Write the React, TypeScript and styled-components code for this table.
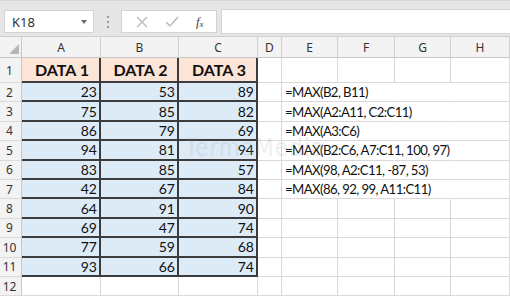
import React from 'react';
import styled, { createGlobalStyle } from 'styled-components';

const GlobalStyle = createGlobalStyle`
  html, body {
    margin: 0;
    padding: 0;
    background: #ffffff;
    overflow: hidden;
  }
`;

const COLUMNS = ['A', 'B', 'C', 'D', 'E', 'F', 'G', 'H'];

const DATA: number[][] = [
  [23, 53, 89],
  [75, 85, 82],
  [86, 79, 69],
  [94, 81, 94],
  [83, 85, 57],
  [42, 67, 84],
  [64, 91, 90],
  [69, 47, 74],
  [77, 59, 68],
  [93, 66, 74],
];

const FORMULAS = [
  '=MAX(B2, B11)',
  '=MAX(A2:A11, C2:C11)',
  '=MAX(A3:C6)',
  '=MAX(B2:C6, A7:C11, 100, 97)',
  '=MAX(98, A2:C11, -87, 53)',
  '=MAX(86, 92, 99, A11:C11)',
];

const App: React.FC = () => {
  const rows = [];
  for (let r = 1; r <= 12; r++) {
    const cells = [];
    cells.push(<RowHead key="h">{r}</RowHead>);
    for (let c = 0; c < COLUMNS.length; c++) {
      const formula = FORMULAS[r - 2];
      const overflow = !!formula && c >= 4;
      if (r === 1 && c < 3) {
        cells.push(
          <Cell key={c} $kind="head">
            DATA {c + 1}
          </Cell>
        );
      } else if (r >= 2 && r <= 11 && c < 3) {
        cells.push(
          <Cell key={c} $kind="data">
            {DATA[r - 2][c]}
          </Cell>
        );
      } else if (c === 4 && formula) {
        cells.push(
          <Cell key={c} $kind="text" $noRight>
            {formula}
          </Cell>
        );
      } else {
        cells.push(<Cell key={c} $kind="plain" $noRight={overflow && c < 7} />);
      }
    }
    rows.push(<React.Fragment key={r}>{cells}</React.Fragment>);
  }

  return (
    <>
      <GlobalStyle />
      <Page>
        <FormulaBar>
          <NameBox>
            <span>K18</span>
            <DropArrow />
          </NameBox>
          <Grip>
            <i />
            <i />
            <i />
          </Grip>
          <ButtonBox>
            <svg width="12" height="12" viewBox="0 0 12 12">
              <path d="M1 1 L11 11 M11 1 L1 11" stroke="#b9b9b9" strokeWidth="1.3" fill="none" />
            </svg>
            <svg width="14" height="12" viewBox="0 0 14 12">
              <path d="M1 6 L5 10 L13 1" stroke="#b9b9b9" strokeWidth="1.4" fill="none" />
            </svg>
            <Fx>
              f<sub>x</sub>
            </Fx>
          </ButtonBox>
          <FormulaInput />
        </FormulaBar>
        <Sheet>
          <Corner>
            <svg width="10" height="10" viewBox="0 0 10 10">
              <path d="M10 0 L10 10 L0 10 Z" fill="#b7b7b7" />
            </svg>
          </Corner>
          {COLUMNS.map((col) => (
            <ColHead key={col}>{col}</ColHead>
          ))}
          {rows}
          <Watermark>TermaMedia</Watermark>
        </Sheet>
      </Page>
    </>
  );
};

const Page = styled.div`
  width: 510px;
  height: 298px;
  overflow: hidden;
  font-family: 'Segoe UI', 'Noto Sans', sans-serif;
`;

const FormulaBar = styled.div`
  display: flex;
  align-items: center;
  height: 37px;
  padding: 10px 0 4px 4px;
  box-sizing: border-box;
  background: #e6e6e6;
  border-top: 1px solid #d8d8d8;
  border-bottom: 1px solid #cfcfcf;
`;

const NameBox = styled.div`
  display: flex;
  align-items: center;
  justify-content: space-between;
  width: 90px;
  height: 23px;
  box-sizing: border-box;
  padding: 0 6px 0 7px;
  background: #ffffff;
  border: 1px solid #d4d4d4;
  font-family: 'Open Sans', 'Noto Sans', sans-serif;
  font-size: 13px;
  color: #222;
`;

const DropArrow = styled.span`
  width: 0;
  height: 0;
  border-left: 3.5px solid transparent;
  border-right: 3.5px solid transparent;
  border-top: 4px solid #6b6b6b;
`;

const Grip = styled.div`
  display: flex;
  flex-direction: column;
  align-items: center;
  gap: 3px;
  width: 27px;

  i {
    width: 2px;
    height: 2px;
    background: #9a9a9a;
  }
`;

const ButtonBox = styled.div`
  display: flex;
  align-items: center;
  justify-content: space-around;
  width: 96px;
  height: 23px;
  box-sizing: border-box;
  padding: 0 4px 0 6px;
  background: #ffffff;
  border: 1px solid #d4d4d4;
`;

const Fx = styled.span`
  font-family: 'Liberation Serif', serif;
  font-style: italic;
  font-size: 13px;
  color: #444;

  sub {
    font-size: 9px;
    vertical-align: -1px;
  }
`;

const FormulaInput = styled.div`
  flex: 1;
  height: 23px;
  margin-left: 4px;
  background: #ffffff;
  border: 1px solid #d4d4d4;
  border-right: none;
`;

const Sheet = styled.div`
  position: relative;
  display: grid;
  grid-template-columns: 22px 79px 78px 79px 24px 56px 57px 56px 59px;
  grid-template-rows: 21px 25px repeat(11, 19.4px);
`;

const Corner = styled.div`
  display: flex;
  align-items: flex-end;
  justify-content: flex-end;
  padding: 0 2px 3px 0;
  background: #f3f3f3;
  border-right: 1px solid #c8c8c8;
  border-bottom: 1px solid #c8c8c8;
`;

const ColHead = styled.div`
  display: flex;
  align-items: center;
  justify-content: center;
  background: #f3f3f3;
  border-right: 1px solid #d0d0d0;
  border-bottom: 1px solid #c8c8c8;
  font-size: 12px;
  color: #333;
`;

const RowHead = styled.div`
  display: flex;
  align-items: center;
  justify-content: center;
  padding-right: 2px;
  background: #f3f3f3;
  border-right: 1px solid #c8c8c8;
  border-bottom: 1px solid #dadada;
  font-size: 12px;
  color: #333;
`;

type CellKind = 'plain' | 'head' | 'data' | 'text';

const Cell = styled.div<{ $kind: CellKind; $noRight?: boolean }>`
  position: relative;
  display: flex;
  align-items: center;
  min-width: 0;
  box-sizing: border-box;
  overflow: visible;
  white-space: nowrap;
  font-family: Lato, 'Open Sans', sans-serif;
  color: #111;
  border-right: ${({ $kind, $noRight }) =>
    $kind === 'head' || $kind === 'data'
      ? '2px solid #3c3c3c'
      : $noRight
      ? '1px solid transparent'
      : '1px solid #d9d9d9'};
  border-bottom: ${({ $kind }) =>
    $kind === 'head' || $kind === 'data' ? '2px solid #3c3c3c' : '1px solid #d9d9d9'};
  background: ${({ $kind }) =>
    $kind === 'head' ? '#fce4d6' : $kind === 'data' ? '#ddebf7' : 'transparent'};
  justify-content: ${({ $kind }) =>
    $kind === 'head' ? 'center' : $kind === 'data' ? 'flex-end' : 'flex-start'};
  padding: ${({ $kind }) => ($kind === 'data' ? '0 2px 0 0' : '0 0 0 3px')};
  font-size: ${({ $kind }) => ($kind === 'head' ? '16px' : $kind === 'text' ? '13.2px' : '14px')};
  font-weight: ${({ $kind }) => ($kind === 'head' ? 700 : 400)};
  letter-spacing: ${({ $kind }) => ($kind === 'text' ? '-0.6px' : '0')};
  z-index: ${({ $kind }) => ($kind === 'text' ? 1 : 0)};
`;

const Watermark = styled.div`
  position: absolute;
  left: 185px;
  top: 97px;
  font-family: 'DejaVu Sans Condensed', 'Liberation Sans', sans-serif;
  font-size: 24px;
  letter-spacing: 1px;
  color: rgba(150, 150, 150, 0.18);
  pointer-events: none;
  z-index: 2;
`;

export default App;
